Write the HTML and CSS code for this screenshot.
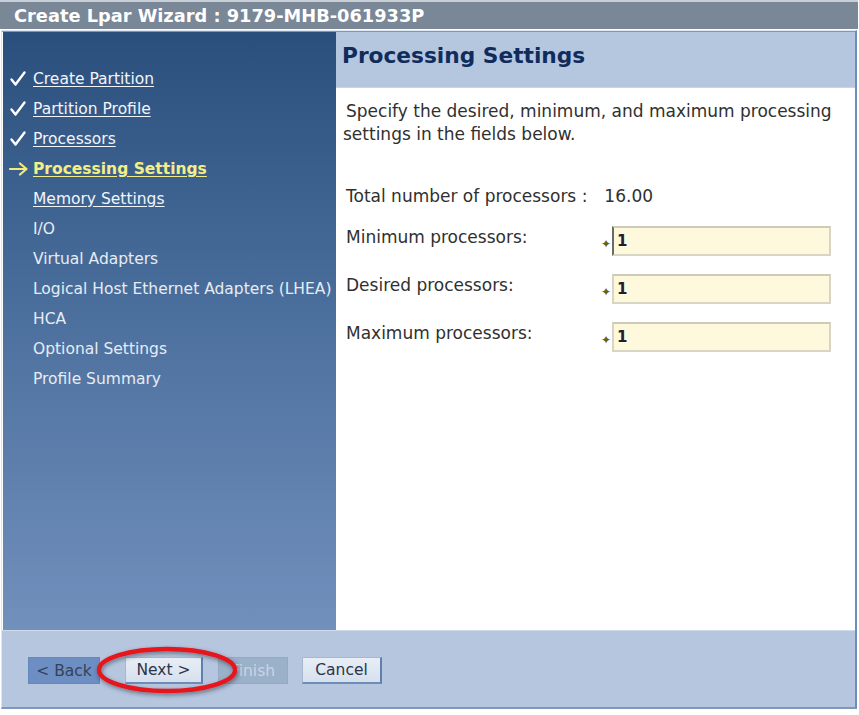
FILE: index.html
```html
<!DOCTYPE html>
<html>
<head>
<meta charset="utf-8">
<link rel="stylesheet" href="styles.css">
</head>
<body>
<div class="window">
  <div class="titlebar">Create Lpar Wizard : 9179-MHB-061933P</div>
  <div class="frame">
    <div class="main">
      <nav class="nav">
        <ul class="steps">
          <li class="step done"><span class="mark"><svg width="18" height="18" viewBox="0 0 18 18"><path d="M2.5 9.5 L6.5 14.5 L15.5 2.5" fill="none" stroke="#ffffff" stroke-width="2.4" stroke-linecap="round" stroke-linejoin="round"/></svg></span><a href="#">Create Partition</a></li>
          <li class="step done"><span class="mark"><svg width="18" height="18" viewBox="0 0 18 18"><path d="M2.5 9.5 L6.5 14.5 L15.5 2.5" fill="none" stroke="#ffffff" stroke-width="2.4" stroke-linecap="round" stroke-linejoin="round"/></svg></span><a href="#">Partition Profile</a></li>
          <li class="step done"><span class="mark"><svg width="18" height="18" viewBox="0 0 18 18"><path d="M2.5 9.5 L6.5 14.5 L15.5 2.5" fill="none" stroke="#ffffff" stroke-width="2.4" stroke-linecap="round" stroke-linejoin="round"/></svg></span><a href="#">Processors</a></li>
          <li class="step current"><span class="mark"><svg width="20" height="14" viewBox="0 0 20 14"><path d="M1 7 H17 M11 1.5 L17.5 7 L11 12.5" fill="none" stroke="#f3ea7a" stroke-width="2.2" stroke-linecap="round" stroke-linejoin="round"/></svg></span><a href="#">Processing Settings</a></li>
          <li class="step next"><span class="mark"></span><a href="#">Memory Settings</a></li>
          <li class="step"><span class="mark"></span>I/O</li>
          <li class="step"><span class="mark"></span>Virtual Adapters</li>
          <li class="step"><span class="mark"></span>Logical Host Ethernet Adapters (LHEA)</li>
          <li class="step"><span class="mark"></span>HCA</li>
          <li class="step"><span class="mark"></span>Optional Settings</li>
          <li class="step"><span class="mark"></span>Profile Summary</li>
        </ul>
      </nav>
      <section class="content">
        <h1 class="heading">Processing Settings</h1>
        <div class="body">
          <p class="intro">Specify the desired, minimum, and maximum processing settings in the fields below.</p>
          <div class="total"><span>Total number of processors :</span><span class="total-val">16.00</span></div>
          <div class="fields">
            <div class="field">
              <label class="label">Minimum processors:</label>
              <span class="req">&#10022;</span>
              <div class="input focused">1</div>
            </div>
            <div class="field">
              <label class="label">Desired processors:</label>
              <span class="req">&#10022;</span>
              <div class="input">1</div>
            </div>
            <div class="field">
              <label class="label">Maximum processors:</label>
              <span class="req">&#10022;</span>
              <div class="input">1</div>
            </div>
          </div>
        </div>
      </section>
    </div>
    <div class="footer">
      <button class="btn btn-back">&lt; Back</button>
      <button class="btn btn-next">Next &gt;</button>
      <button class="btn btn-finish">Finish</button>
      <button class="btn btn-cancel">Cancel</button>
      <svg class="circle" viewBox="0 0 160 64" preserveAspectRatio="none">
        <defs>
          <filter id="sh" x="-20%" y="-40%" width="140%" height="180%">
            <feDropShadow dx="1" dy="2" stdDeviation="2" flood-color="#202838" flood-opacity="0.55"/>
          </filter>
        </defs>
        <ellipse cx="80" cy="32" rx="68" ry="21" fill="none" stroke="#e5141c" stroke-width="4.5" filter="url(#sh)"/>
      </svg>
    </div>
  </div>
</div>
</body>
</html>
```
FILE: styles.css
```css
html, body {
  margin: 0;
  padding: 0;
  background: #ffffff;
}
body {
  font-family: "DejaVu Sans", Verdana, sans-serif;
}
.window {
  width: 858px;
}
.titlebar {
  height: 27px;
  border-top: 2px solid #c9cfd6;
  background: #798797;
  color: #ffffff;
  font-weight: bold;
  font-size: 17.8px;
  line-height: 27px;
  padding-left: 14px;
  white-space: nowrap;
}
.frame {
  margin-top: 1px;
  margin-left: 1px;
  width: 853px;
  border: 1px solid #dfe5ee;
  border-right: 2px solid #6f8dbb;
  border-bottom: 2px solid #7f97bd;
  display: flex;
  flex-direction: column;
  height: 676px;
}
.main {
  display: flex;
  height: 598px;
  border-top: 1px solid #7f97bd;
}
.nav {
  width: 333px;
  margin-left: 1px;
  background: linear-gradient(to bottom, #2b4f7d 0%, #4a6e9c 45%, #7290bc 100%);
  padding-top: 32px;
  box-sizing: border-box;
}
.steps {
  list-style: none;
  margin: 0;
  padding: 0;
}
.step {
  display: flex;
  align-items: center;
  height: 30px;
  font-size: 15.5px;
  color: #e6ecf4;
  white-space: nowrap;
}
.mark {
  width: 30px;
  padding-left: 6px;
  box-sizing: border-box;
  display: flex;
  align-items: center;
}
.step a {
  color: #f2f5fa;
  text-decoration: underline;
  text-underline-offset: 2px;
}
.step.current a {
  color: #f4ee86;
  font-weight: bold;
}
.content {
  flex: 1;
  display: flex;
  flex-direction: column;
  background: #ffffff;
}
.heading {
  margin: 0;
  height: 55px;
  background: #b5c6df;
  color: #102c5c;
  font-size: 21.7px;
  font-weight: bold;
  padding-left: 6px;
  line-height: 48px;
  border-bottom: 1px solid #c9d5e7;
}
.body {
  padding: 12px 0 0 7px;
  color: #303030;
  font-size: 17px;
}
.intro {
  margin: 0;
  line-height: 23px;
  text-indent: 3px;
  padding-right: 10px;
}
.total {
  margin-top: 40px;
  display: flex;
  gap: 17px;
  line-height: 20px;
  padding-left: 3px;
}
.fields {
  margin-top: 20px;
  display: flex;
  flex-direction: column;
  gap: 18px;
}
.field {
  display: flex;
  align-items: flex-start;
  height: 30px;
  padding-left: 3px;
}
.label {
  width: 255px;
  line-height: 22px;
}
.req {
  width: 11px;
  font-size: 12px;
  color: #6b6020;
  padding-top: 12px;
  line-height: 12px;
}
.input {
  width: 212px;
  height: 26px;
  background: #fef8dc;
  border: 2px solid #d8d5c2;
  border-top-color: #cfcbb6;
  font-size: 15px;
  font-weight: bold;
  color: #1c2030;
  line-height: 27px;
  padding-left: 3px;
  box-sizing: content-box;
}
.input.focused {
  border-left: 2px solid #6a6a6a;
}
.footer {
  position: relative;
  flex: 1;
  background: #b6c6df;
  border-top: 1px solid #cfdaea;
  display: flex;
  align-items: flex-start;
  padding: 26px 0 0 26px;
}
.btn {
  font-family: "DejaVu Sans", Verdana, sans-serif;
  font-size: 15.5px;
  height: 27px;
  padding: 0;
  white-space: nowrap;
  background: linear-gradient(to bottom, #e8eef6, #d6e0ee);
  color: #2c3448;
  border: 1px solid #a8b8d0;
  border-right: 2px solid #5f7fae;
  border-bottom: 2px solid #6e8cb8;
}
.btn-back {
  width: 72px;
  background: #6d8ec3;
  color: #34425a;
  border: 1px solid #6788bd;
}
.btn-next {
  width: 78px;
  margin-left: 25px;
}
.btn-finish {
  width: 70px;
  margin-left: 15px;
  background: #9bb0c9;
  color: #c9d5e3;
  border: 1px solid #93a9c4;
}
.btn-cancel {
  width: 80px;
  margin-left: 14px;
}
.circle {
  position: absolute;
  left: 85px;
  top: 7px;
  width: 160px;
  height: 64px;
  pointer-events: none;
}
```
